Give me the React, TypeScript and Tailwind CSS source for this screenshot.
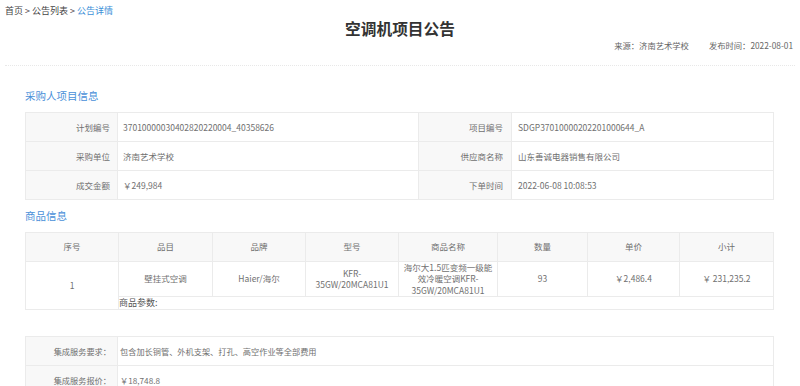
import React from "react";

const font = { fontFamily: '"Noto Sans CJK SC", "Noto Sans", sans-serif' };

function InfoTable() {
  const rows: [string, string, string, string][] = [
    ["计划编号", "37010000030402820220004_40358626", "项目编号", "SDGP37010000202201000644_A"],
    ["采购单位", "济南艺术学校", "供应商名称", "山东善诚电器销售有限公司"],
    ["成交金额", "￥249,984", "下单时间", "2022-06-08 10:08:53"],
  ];
  return (
    <div className="w-[749px] border-l border-t border-[#ebebeb] grid grid-cols-[92px_301px_93px_262px]">
      {rows.map((r, i) => (
        <React.Fragment key={i}>
          <div className="h-[29px] border-r border-b border-[#ebebeb] bg-[#f8f8f8] flex items-center justify-end pr-[7px] text-[8.5px] text-[#707070]">
            {r[0]}
          </div>
          <div className="h-[29px] border-r border-b border-[#ebebeb] bg-white flex items-center pl-[5px] text-[8.5px] text-[#707070]">
            {r[1]}
          </div>
          <div className="h-[29px] border-r border-b border-[#ebebeb] bg-[#f8f8f8] flex items-center justify-end pr-[8px] text-[8.5px] text-[#707070]">
            {r[2]}
          </div>
          <div className="h-[29px] border-r border-b border-[#ebebeb] bg-white flex items-center pl-[6px] text-[8.5px] text-[#707070]">
            {r[3]}
          </div>
        </React.Fragment>
      ))}
    </div>
  );
}

function GoodsTable() {
  const heads = ["序号", "品目", "品牌", "型号", "商品名称", "数量", "单价", "小计"];
  const cell = "border-r border-b border-[#ebebeb] flex items-center justify-center text-center text-[8.5px] text-[#707070] leading-[11.5px]";
  return (
    <div className="w-[749px] border-l border-t border-[#ebebeb] grid grid-cols-[93px_94px_93px_93px_99px_90px_92px_94px] grid-rows-[29px_35px_13px]">
      {heads.map((h) => (
        <div key={h} className={`${cell} bg-[#f8f8f8]`}>
          {h}
        </div>
      ))}
      <div className={`${cell} row-span-2 bg-white`}>1</div>
      <div className={cell}>壁挂式空调</div>
      <div className={cell}>Haier/海尔</div>
      <div className={cell}>
        <span>
          KFR-
          <br />
          35GW/20MCA81U1
        </span>
      </div>
      <div className={cell}>
        <span>
          海尔大1.5匹变频一级能
          <br />
          效冷暖空调KFR-
          <br />
          35GW/20MCA81U1
        </span>
      </div>
      <div className={cell}>93</div>
      <div className={cell}>￥2,486.4</div>
      <div className={cell}>￥ 231,235.2</div>
      <div className="col-span-7 border-r border-b border-[#ebebeb] flex items-center text-[9px] leading-[12px] text-[#555] pl-0">
        商品参数:
      </div>
    </div>
  );
}

function ServiceTable() {
  const rows: [string, string][] = [
    ["集成服务要求：", "包含加长铜管、外机支架、打孔、高空作业等全部费用"],
    ["集成服务报价：", "￥18,748.8"],
  ];
  return (
    <div className="w-[749px] border-l border-t border-[#ebebeb] grid grid-cols-[92px_656px]">
      {rows.map((r, i) => (
        <React.Fragment key={i}>
          <div className="h-[29px] border-r border-b border-[#ebebeb] bg-[#f8f8f8] flex items-center justify-end pr-[6px] text-[8.2px] text-[#707070]">
            {r[0]}
          </div>
          <div className="h-[29px] border-r border-b border-[#ebebeb] bg-white flex items-center pl-[2px] text-[8.2px] text-[#707070]">
            {r[1]}
          </div>
        </React.Fragment>
      ))}
    </div>
  );
}

export default function App() {
  return (
    <div className="w-[800px] h-[386px] overflow-hidden bg-white" style={font}>
      <div className="pt-[5px] pl-[5px] text-[9px] leading-[12px] text-[#444]">
        首页 &gt; 公告列表 &gt; <span className="text-[#3d8fd8]">公告详情</span>
      </div>
      <h1 className="mt-[2px] text-center text-[15.7px] leading-[20px] font-bold text-[#333]">
        空调机项目公告
      </h1>
      <div className="mt-[1px] flex justify-end pr-[7px] text-[8.3px] leading-[11px] text-[#666] gap-[20px]">
        <span>来源：济南艺术学校</span>
        <span>发布时间：2022-08-01</span>
      </div>
      <div className="mx-[5px] mt-[14px] border-t border-dotted border-[#e8e8e8]" />
      <div className="px-[25px]">
        <div className="mt-[23px] mb-[9px] text-[10.5px] leading-[14px] text-[#4a90d9]">采购人项目信息</div>
        <InfoTable />
        <div className="mt-[9px] mb-[9px] text-[10.5px] leading-[14px] text-[#4a90d9]">商品信息</div>
        <GoodsTable />
        <div className="mt-[26px]">
          <ServiceTable />
        </div>
      </div>
    </div>
  );
}
